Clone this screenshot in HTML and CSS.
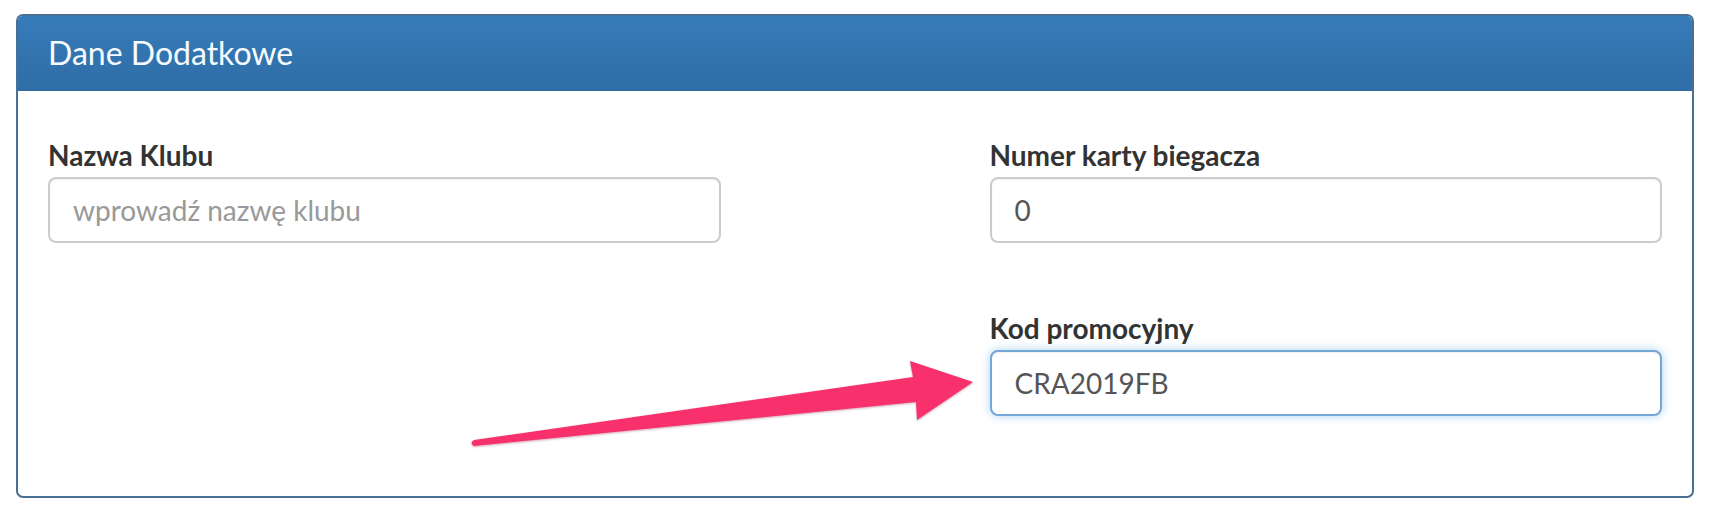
FILE: index.html
```html
<!DOCTYPE html>
<html lang="pl">
<head>
<meta charset="utf-8">
<title>Dane Dodatkowe</title>
<link rel="stylesheet" href="styles.css">
</head>
<body>
<div class="page">
  <section class="panel">
    <header class="panel-heading">
      <h3 class="panel-title">Dane Dodatkowe</h3>
    </header>
    <div class="panel-body">
      <div class="col col-left">
        <div class="form-group">
          <label class="label" for="klub">Nazwa Klubu</label>
          <input class="input" id="klub" type="text" placeholder="wprowadź nazwę klubu">
        </div>
      </div>
      <div class="col col-right">
        <div class="form-group">
          <label class="label" for="karta">Numer karty biegacza</label>
          <input class="input" id="karta" type="text" value="0">
        </div>
        <div class="form-group last">
          <label class="label" for="kod">Kod promocyjny</label>
          <input class="input input-focus" id="kod" type="text" value="CRA2019FB">
        </div>
      </div>
    </div>
  </section>
  <svg class="arrow" width="1712" height="512" viewBox="0 0 1712 512" aria-hidden="true">
    <path d="M474 440 L913 377 L910 361 L973 382 L917 420 L916 402 L474 446 Q469 443 474 440 Z" fill="#f8306c"/>
  </svg>
</div>
</body>
</html>
```
FILE: styles.css
```css
html, body {
  margin: 0;
  padding: 0;
  background: #ffffff;
}

.page {
  position: relative;
  width: 1712px;
  height: 512px;
  padding: 14px 18px 0 16px;
  box-sizing: border-box;
  font-family: "Lato", "Open Sans", sans-serif;
}

.panel {
  border: 2px solid #4a6f95;
  border-radius: 7px;
  overflow: hidden;
  background: #ffffff;
}

.panel-heading {
  background: linear-gradient(to bottom, #367bb9 0%, #2f6da6 100%);
  padding: 19px 30px 20px;
}

.panel-title {
  margin: 0;
  font-size: 32px;
  line-height: 36px;
  font-weight: 400;
  color: #f6fbff;
}

.panel-body {
  display: grid;
  grid-template-columns: 5fr 2fr 5fr;
  padding: 49px 30px 80px;
}

.col-left {
  grid-column: 1;
}

.col-right {
  grid-column: 3;
}

.form-group {
  margin-bottom: 70px;
}

.form-group.last {
  margin-bottom: 0;
}

.label {
  display: block;
  font-size: 28px;
  line-height: 31px;
  font-weight: 700;
  color: #333333;
  margin-bottom: 6px;
}

.input {
  display: block;
  width: 100%;
  height: 66px;
  box-sizing: border-box;
  border: 2px solid #cccccc;
  border-radius: 8px;
  padding: 0 23px;
  font-family: "Lato", "Open Sans", sans-serif;
  font-size: 28px;
  color: #555555;
  background: #ffffff;
  box-shadow: inset 0 1px 2px rgba(0, 0, 0, 0.06);
  outline: none;
}

.input::placeholder {
  color: #999999;
}

.input-focus {
  border-color: #74a6d6;
  box-shadow: inset 0 1px 2px rgba(0, 0, 0, 0.06), 0 0 10px rgba(102, 175, 233, 0.55);
}

.arrow {
  position: absolute;
  left: 0;
  top: 0;
  pointer-events: none;
  filter: drop-shadow(0 1px 1px rgba(120, 0, 40, 0.35));
}
```
